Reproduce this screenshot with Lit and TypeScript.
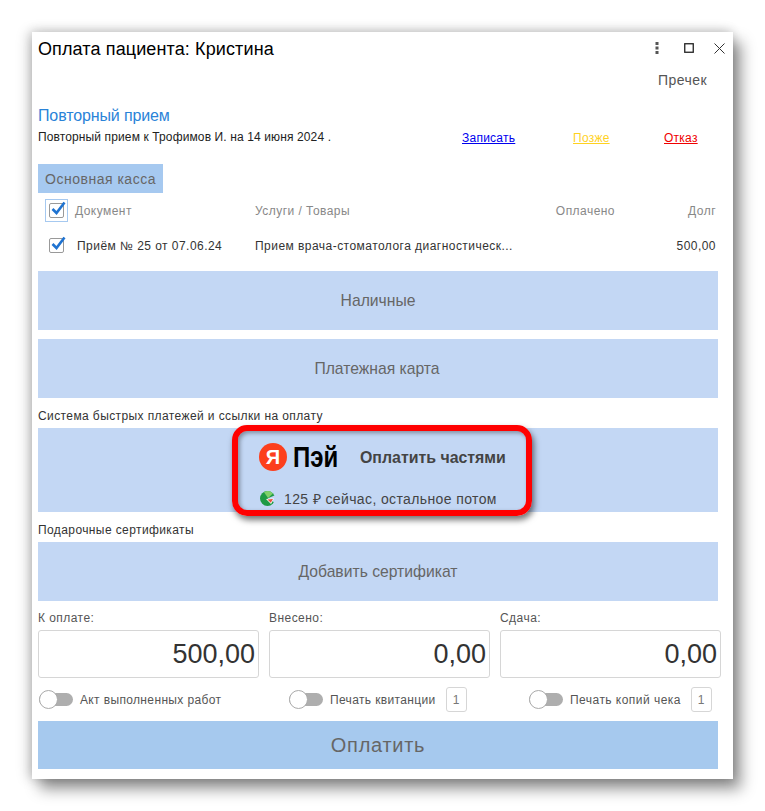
import { LitElement, html, css } from "lit";
import { customElement } from "lit/decorators.js";

const check = html`<svg class="tick" width="16" height="16" viewBox="0 0 16 16"><path d="M2.5 8 L6.5 12 L14.5 1.5" fill="none" stroke="#1f73d1" stroke-width="2.6"/></svg>`;

@customElement("app-root")
export class AppRoot extends LitElement {
  static styles = css`
    :host { display: block; width: 765px; height: 811px; background: #fff; font-family: "Liberation Sans", Arial, sans-serif; color: #333; overflow: hidden; }
    .page { padding: 32px; box-sizing: border-box; height: 811px; }
    .win { position: relative; width: 701px; height: 747px; background: #fff; box-sizing: border-box; padding: 0 15px 0 6px;
      box-shadow: 8px 10px 14px rgba(0,0,0,.42), -4px 0 12px rgba(0,0,0,.18), 0 -2px 10px rgba(0,0,0,.1); }
    .head { display: flex; align-items: center; height: 34px; }
    .title { flex: 1; font-size: 18px; letter-spacing: .12px; color: #000; }
    .winbtns { display: flex; align-items: center; gap: 16px; margin-right: -7px; margin-top: -2px; }
    .winbtns svg { display: block; }
    .max { margin-left: 9px; }
    .close { margin-left: 4px; }
    .precheck { height: 28px; line-height: 28px; text-align: right; padding-right: 11px; font-size: 14px; letter-spacing: .45px; color: #555; }
    .repeat { margin-top: 12px; font-size: 16px; letter-spacing: -.13px; line-height: 19px; color: #2a83d8; }
    .line { display: flex; align-items: center; height: 16px; margin-top: 4px; font-size: 12px; color: #222; }
    .line .sub { width: 424px; letter-spacing: .12px; }
    .line a { text-decoration: underline; font-size: 12px; letter-spacing: .25px; margin-top: 2px; }
    .blue { color: #0000ee; width: 111px; }
    .yel { color: #ffd21f; width: 91px; }
    .red { color: #f00000; }
    .tab { display: inline-block; margin-top: 19px; height: 29px; line-height: 30px; width: 125px; box-sizing: border-box; text-align: center; background: #a6c9f0; color: #666; font-size: 14px; letter-spacing: .5px; }
    .tbl { display: grid; grid-template-columns: 217px 280px 80px 101px; font-size: 12px; letter-spacing: .46px; }
    .hdr { color: #888; height: 35px; align-items: center; }
    .row { color: #333; height: 35px; align-items: center; margin-bottom: 8px; }
    .cell { display: flex; align-items: center; white-space: nowrap; }
    .right { justify-content: flex-end; }
    .cell.paid { justify-content: flex-end; }
    .box { position: relative; width: 15px; height: 15px; border: 1px solid #999; border-radius: 2px; box-sizing: border-box; background: #fff; }
    .tick { position: absolute; left: 0; top: -3px; }
    .focus { display: flex; align-items: center; justify-content: center; width: 23px; height: 23px; border: 1px solid #a6c9f0; box-sizing: border-box; margin: 0 7px 0 7px; }
    .rowbox { margin: 0 13px 0 11px; }
    .btn { display: flex; align-items: center; justify-content: center; height: 59px; background: #c3d7f4; color: #666; font-size: 15.7px; }
    .btn.shift { padding-right: 2px; }
    .btn + .btn { margin-top: 9px; }
    .cap { height: 17px; line-height: 18px; font-size: 12px; letter-spacing: .4px; color: #333; }
    .cap.a { margin-top: 9px; margin-bottom: 4px; }
    .cap.b { margin-top: 9px; margin-bottom: 4px; }
    .ya { height: 84px; background: #c3d7f4; display: flex; flex-direction: column; align-items: flex-start; padding-left: 221px; box-sizing: border-box; }
    .ya1 { display: flex; align-items: center; height: 44px; margin-top: 7px; }
    .yalogo { width: 28px; height: 28px; border-radius: 50%; background: #fc3f1d; color: #fff; font-size: 20px; font-weight: 700; display: flex; align-items: center; justify-content: center; flex: none; }
    .pay { display: inline-block; font-weight: 700; font-size: 30px; color: #000; margin-left: 6px; width: 67px; transform: scaleX(.8); transform-origin: left center; }
    .part { font-weight: 700; font-size: 15.9px; color: #444; white-space: nowrap; margin-top: 1px; }
    .ya2 { display: flex; align-items: center; height: 20px; margin-top: 9px; font-size: 14px; letter-spacing: .38px; color: #444; }
    .ya2 svg { margin: 0 9px 0 1px; }
    .hl { position: absolute; left: 200px; top: 393px; width: 300px; height: 91px; box-sizing: border-box; border: 6px solid #ff0000; border-radius: 15px;
      box-shadow: 2px 4px 6px rgba(0,0,0,.55), inset 2px 2px 4px rgba(0,0,0,.35); pointer-events: none; }
    .sums { display: grid; grid-template-columns: repeat(3, 221px); column-gap: 10px; margin-top: 8px; }
    .sums label { display: block; height: 21px; line-height: 18px; font-size: 12px; letter-spacing: .45px; color: #555; }
    .sum { height: 48px; box-sizing: border-box; border: 1px solid #d6d6d6; border-radius: 3px; display: flex; align-items: center; justify-content: flex-end; padding: 0 3px; font-size: 27px; color: #333; }
    .opts { display: grid; grid-template-columns: 250px 240px 1fr; margin-top: 8px; height: 27px; font-size: 12px; letter-spacing: .36px; color: #555; }
    .opt { display: flex; align-items: center; white-space: nowrap; }
    .opt:last-child { letter-spacing: .46px; }
    .tg { position: relative; width: 34px; height: 13px; border-radius: 7px; background: #aeaeae; margin-right: 7px; margin-left: 1px; flex: none; }
    .tg::before { content: ""; position: absolute; left: 0; top: -3px; width: 19px; height: 19px; border-radius: 50%; background: #fff; border: 1px solid #aaa; box-sizing: border-box; }
    .n { width: 21px; height: 25px; box-sizing: border-box; border: 1px solid #d6d6d6; border-radius: 3px; display: flex; align-items: center; justify-content: center; margin-left: 10px; color: #777; }
    .paybtn { display: flex; align-items: center; justify-content: center; margin-top: 8px; height: 48px; background: #a6c9ee; color: #666; font-size: 20px; letter-spacing: .7px; }
  `;

  private opt(text: string, n?: string) {
    return html`<div class="opt"><span class="tg"></span><span>${text}</span>${n ? html`<span class="n">${n}</span>` : ""}</div>`;
  }

  render() {
    return html`<div class="page"><div class="win">
      <div class="head">
        <div class="title">Оплата пациента: Кристина</div>
        <div class="winbtns">
          <svg width="4" height="12" viewBox="0 0 4 12"><g fill="#555"><rect x="0.5" y="0" width="3" height="3"/><rect x="0.5" y="4.5" width="3" height="3"/><rect x="0.5" y="9" width="3" height="3"/></g></svg>
          <svg class="max" width="10" height="10" viewBox="0 0 10 10"><rect x=".75" y=".75" width="8.5" height="8.5" fill="none" stroke="#222" stroke-width="1.3"/></svg>
          <svg class="close" width="11" height="11" viewBox="0 0 11 11"><path d="M.5.5l10 10M10.5.5l-10 10" stroke="#333" stroke-width="1" fill="none"/></svg>
        </div>
      </div>
      <div class="precheck">Пречек</div>
      <div class="repeat">Повторный прием</div>
      <div class="line"><span class="sub">Повторный прием к Трофимов И. на 14 июня 2024 .</span><a class="blue">Записать</a><a class="yel">Позже</a><a class="red">Отказ</a></div>
      <div class="tab">Основная касса</div>
      <div class="tbl hdr">
        <div class="cell"><span class="focus"><span class="box">${check}</span></span>Документ</div>
        <div class="cell">Услуги / Товары</div>
        <div class="cell paid">Оплачено</div>
        <div class="cell right">Долг</div>
      </div>
      <div class="tbl row">
        <div class="cell"><span class="box rowbox">${check}</span>Приём № 25 от 07.06.24</div>
        <div class="cell">Прием врача-стоматолога диагностическ...</div>
        <div class="cell"></div>
        <div class="cell right">500,00</div>
      </div>
      <div class="btn">Наличные</div>
      <div class="btn shift">Платежная карта</div>
      <div class="cap a">Система быстрых платежей и ссылки на оплату</div>
      <div class="ya">
        <div class="ya1"><span class="yalogo">Я</span><span class="pay">Пэй</span><span class="part">Оплатить частями</span></div>
        <div class="ya2">
          <svg width="15" height="15" viewBox="0 0 15 15"><circle cx="7.5" cy="7.5" r="7.5" fill="#1f9a45"/><path d="M4 1.2A7.5 7.5 0 0 1 13 2.5L8 7Z" fill="#7fd06a"/><path d="M7.5 7.5 L15.5 4 L15.5 12 Z" fill="#c3d7f4"/><path d="M6 8 L14 7.5 L11 13 Z" fill="#fff"/><path d="M7.5 8.4 L13 8 L10.8 11.8 Z" fill="#e8503a"/></svg>
          125 ₽ сейчас, остальное потом
        </div>
      </div>
      <div class="cap b">Подарочные сертификаты</div>
      <div class="btn">Добавить сертификат</div>
      <div class="sums">
        <div><label>К оплате:</label><div class="sum">500,00</div></div>
        <div><label>Внесено:</label><div class="sum">0,00</div></div>
        <div><label>Сдача:</label><div class="sum">0,00</div></div>
      </div>
      <div class="opts">
        ${this.opt("Акт выполненных работ")}
        ${this.opt("Печать квитанции", "1")}
        ${this.opt("Печать копий чека", "1")}
      </div>
      <div class="paybtn">Оплатить</div>
      <div class="hl"></div>
    </div></div>`;
  }
}
